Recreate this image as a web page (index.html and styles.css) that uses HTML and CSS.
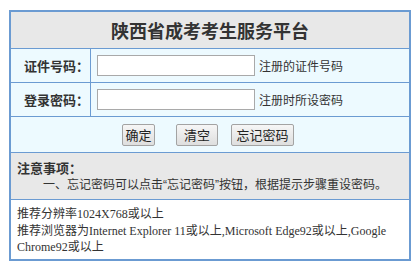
FILE: index.html
```html
<!DOCTYPE html>
<html lang="zh-CN">
<head>
    <meta charset="UTF-8">
    <title>陕西省成考考生服务平台</title>
    <link rel="stylesheet" href="styles.css">
</head>
<body>
    <div class="login-box">
        <div class="title">陕西省成考考生服务平台</div>

        <div class="row">
            <div class="label">证件号码：</div>
            <div class="field">
                <input type="text" class="input">
                <span class="hint">注册的证件号码</span>
            </div>
        </div>
        <div class="row">
            <div class="label">登录密码：</div>
            <div class="field">
                <input type="password" class="input">
                <span class="hint">注册时所设密码</span>
            </div>
        </div>

        <div class="buttons">
            <button class="btn btn-ok">确定</button>
            <button class="btn btn-clear">清空</button>
            <button class="btn btn-forget">忘记密码</button>
        </div>

        <div class="notice">
            <div class="notice-title">注意事项：</div>
            <div class="notice-item">一、忘记密码可以点击“忘记密码”按钮，根据提示步骤重设密码。</div>
        </div>

        <div class="info">
            推荐分辨率1024X768或以上<br>
            推荐浏览器为Internet Explorer 11或以上,Microsoft Edge92或以上,Google Chrome92或以上
        </div>
    </div>
</body>
</html>
```

FILE: styles.css
```css
body {
    margin: 0;
    background: #fff;
    font-family: "Noto Sans CJK SC", sans-serif;
    color: #333;
}
.login-box {
    width: 398px;
    margin: 10px 0 0 9px;
    border: 2px solid #6b9bd2;
}
.title {
    height: 36px;
    line-height: 36px;
    text-align: center;
    font-size: 18px;
    font-weight: bold;
    background: #e8e8e8;
    border-bottom: 1px solid #6b9bd2;
}
.row {
    display: grid;
    grid-template-columns: 80px 1fr;
    height: 33px;
    background: #edfaff;
    border-bottom: 1px solid #6b9bd2;
}
.label {
    border-right: 1px solid #6b9bd2;
    display: flex;
    align-items: center;
    justify-content: center;
    padding-left: 12px;
    font-size: 13px;
    font-weight: bold;
}
.field {
    display: flex;
    align-items: center;
    padding-left: 6px;
}
.input {
    box-sizing: border-box;
    width: 158px;
    height: 21px;
    margin: 0;
    border: 1px solid #a9a9a9;
    background: #fff;
}
.hint {
    margin-left: 4px;
    font-size: 12px;
}
.buttons {
    display: flex;
    justify-content: center;
    align-items: center;
    height: 35px;
    padding-right: 4px;
    background: #edfaff;
    border-bottom: 1px solid #6b9bd2;
}
.btn {
    box-sizing: border-box;
    height: 22px;
    padding: 0;
    font-family: "Noto Sans CJK SC", sans-serif;
    font-size: 13px;
    color: #222;
    border: 1px solid #a3a3a3;
    border-radius: 2px;
    background: linear-gradient(#f6f6f6, #dedede);
}
.btn-ok {
    width: 33px;
    margin-right: 21px;
}
.btn-clear {
    width: 42px;
    margin-right: 13px;
}
.btn-forget {
    width: 63px;
}
.notice {
    height: 47px;
    box-sizing: border-box;
    padding: 6px 0 0 6px;
    background: #e8e8e8;
    border-bottom: 1px solid #6b9bd2;
}
.notice-title {
    font-size: 13px;
    font-weight: bold;
    line-height: 18px;
}
.notice-item {
    font-family: "Liberation Sans", "Noto Sans CJK SC", sans-serif;
    font-size: 12px;
    line-height: 16px;
    padding-left: 26px;
}
.info {
    height: 59px;
    box-sizing: border-box;
    padding: 6px 6px 0 6px;
    font-family: "Liberation Serif", "Noto Sans CJK SC", serif;
    font-size: 12px;
    line-height: 16.5px;
}
```
